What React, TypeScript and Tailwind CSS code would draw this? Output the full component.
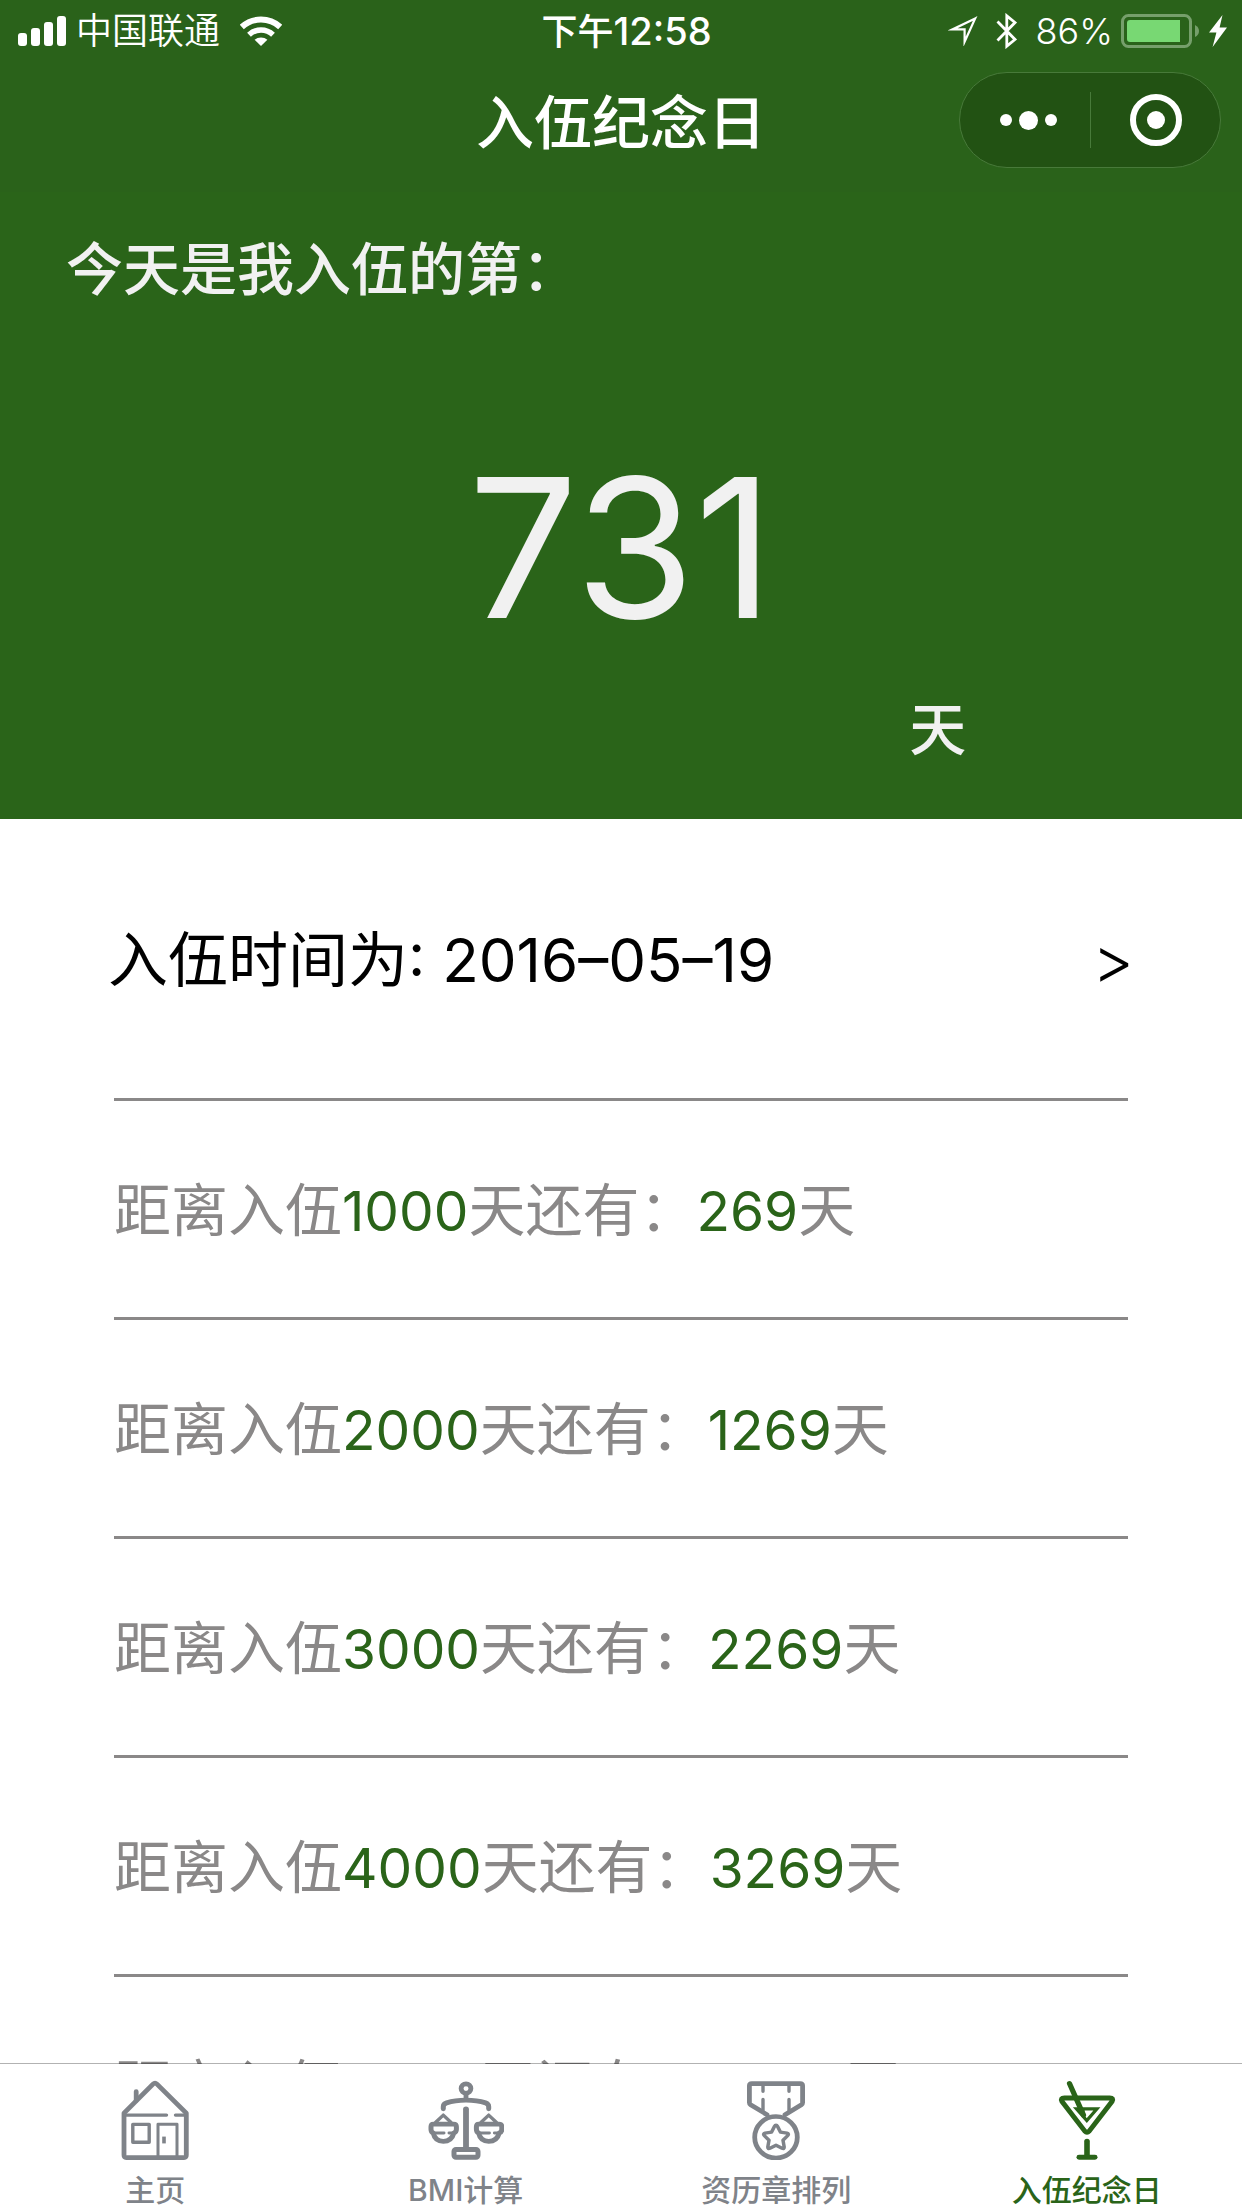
import React from "react";

const milestones = [
  { total: 1000, left: 269 },
  { total: 2000, left: 1269 },
  { total: 3000, left: 2269 },
  { total: 4000, left: 3269 },
  { total: 5000, left: 4269 },
];

function SignalIcon() {
  return (
    <svg width="48" height="30" viewBox="0 0 48 30" fill="currentColor" aria-hidden="true">
      <rect x="0" y="17" width="9" height="13" rx="3" />
      <rect x="13" y="12" width="9" height="18" rx="3" />
      <rect x="26" y="6" width="9" height="24" rx="3" />
      <rect x="39" y="0" width="9" height="30" rx="3" />
    </svg>
  );
}

function WifiIcon() {
  return (
    <svg width="42" height="30" viewBox="0 0 42 30" fill="none" stroke="currentColor" strokeWidth="6" aria-hidden="true">
      <path d="M1.8 11A28.5 28.5 0 0 1 40.2 11" />
      <path d="M9 18.8A17.5 17.5 0 0 1 33 18.8" strokeWidth="5.5" />
      <path d="M14.6 23.8A10 10 0 0 1 27.4 23.8L21 30Z" fill="currentColor" stroke="none" />
    </svg>
  );
}

function LocationIcon() {
  return (
    <svg width="30" height="30" viewBox="0 0 30 30" fill="none" stroke="currentColor" strokeWidth="2.2" aria-hidden="true">
      <path d="M27.2 2.4L4.5 13.4H16.6L16.6 25.8Z" strokeMiterlimit="6" />
    </svg>
  );
}

function BluetoothIcon() {
  return (
    <svg width="22" height="36" viewBox="0 0 22 36" fill="none" stroke="currentColor" strokeWidth="2.8" aria-hidden="true">
      <path d="M1.5 8.6L19 26.5L10.8 33.2V2.8L19 9.5L1.5 27.4" />
    </svg>
  );
}

function BatteryIcon() {
  return (
    <svg width="78" height="34" viewBox="0 0 78 34" aria-hidden="true">
      <rect x="1.5" y="1.5" width="68" height="31" rx="6" fill="none" stroke="#769f6b" strokeWidth="3" />
      <path d="M9 6H59V28H9Q6 28 6 25V9Q6 6 9 6Z" fill="#78d873" />
      <path d="M74 11Q78 13 78 17T74 23Z" fill="#769f6b" />
    </svg>
  );
}

function BoltIcon() {
  return (
    <svg width="18" height="32" viewBox="0 0 18 32" fill="currentColor" aria-hidden="true">
      <path d="M13.5 0L0 17.6H7.4L3.6 32L18 12.6H10.6Z" />
    </svg>
  );
}

function HomeIcon() {
  return (
    <svg width="68" height="80" viewBox="0 0 68 82" preserveAspectRatio="none" fill="none" stroke="currentColor" strokeLinecap="round" strokeLinejoin="round" aria-hidden="true">
      <path d="M3 34L32 4.2Q34 2.2 36 4.2L65.3 34V77Q65.3 79.5 63 79.5H5.2Q3 79.5 3 77Z" strokeWidth="4.8" />
      <path d="M4 36H45.5M54.5 36H64" strokeWidth="3.4" />
      <path d="M15.2 12V21" strokeWidth="4.8" />
      <rect x="11.8" y="45.4" width="16.4" height="18.4" strokeWidth="3.4" />
      <path d="M37 78V45.4H56V78" strokeWidth="3" />
      <path d="M43 58V65" strokeWidth="3.6" strokeLinecap="butt" />
    </svg>
  );
}

function Pan({ x }: { x: number }) {
  return (
    <g transform={`translate(${x} 0)`}>
      <path d="M7.5 43.5L15.3 36L23.1 43.5" strokeWidth="3.4" />
      <path d="M5.4 45.2H25.6Q28.4 45.2 28.4 48V50.5Q28.4 53.4 25.8 54.4Q23.6 62.9 15.3 62.9T5.2 54.4Q3 53.4 3 50.5V48Q3 45.2 5.4 45.2Z" strokeWidth="5" />
      <path d="M7 54.4H16M21 54.4H25" strokeWidth="3" />
    </g>
  );
}

function ScaleIcon() {
  return (
    <svg width="76" height="80" viewBox="0 0 76 82" preserveAspectRatio="none" fill="none" stroke="currentColor" strokeLinecap="round" strokeLinejoin="round" aria-hidden="true">
      <circle cx="38" cy="8.8" r="4.9" strokeWidth="4.8" />
      <path d="M38 15V20" strokeWidth="4.8" />
      <path d="M15.3 29.5V27.4Q15.3 24.5 18.6 23.4Q27 20.6 38 20.6T57.6 23.4Q60.7 24.5 60.7 27.4V29.5" strokeWidth="5" />
      <path d="M38 30V69" strokeWidth="5.8" />
      <rect x="26" y="71.2" width="24" height="8" rx="2" strokeWidth="5" />
      <Pan x={0} />
      <Pan x={45.4} />
    </svg>
  );
}

function MedalIcon() {
  return (
    <svg width="60" height="80" viewBox="0 0 60 82" preserveAspectRatio="none" fill="none" stroke="currentColor" strokeLinecap="round" strokeLinejoin="round" aria-hidden="true">
      <path d="M21 35.5L4.6 25.4Q3.4 24.6 3.4 23V6Q3.4 3.7 5.8 3.7H54.2Q56.6 3.7 56.6 6V23Q56.6 24.6 55.4 25.4L39 35.5" strokeWidth="4.8" />
      <path d="M17 6V11.5M17 20V31M43 6V11.5M43 20V31" strokeWidth="3.4" />
      <circle cx="30" cy="58.7" r="21.3" strokeWidth="4.8" />
      <path d="M30 46.3Q31 46.3 31.6 47.6L34.4 53.4L41 54.5Q43.4 55.2 41.7 57L37 61.7L38.2 68.6Q38.2 71 36 70L30 66.8L24 70Q21.8 71 21.8 68.6L23 61.7L18.3 57Q16.6 55.2 19 54.5L25.6 53.4L28.4 47.6Q29 46.3 30 46.3Z" strokeWidth="3.5" />
    </svg>
  );
}

function CocktailIcon() {
  return (
    <svg width="58" height="80" viewBox="0 0 58 82" preserveAspectRatio="none" fill="none" stroke="currentColor" strokeLinecap="round" strokeLinejoin="round" aria-hidden="true">
      <path d="M6.4 18.4H51.8Q56 18.4 54 22L31.2 52.4Q29 54.8 26.8 52.4L4 22Q2 18.4 6.4 18.4Z" strokeWidth="5" />
      <path d="M11.5 3.6L25.5 36" strokeWidth="5.2" />
      <path d="M18.4 29.6H39L28.8 41.6Z" strokeWidth="3.2" strokeLinejoin="miter" />
      <path d="M18.4 29.6H26V36L28 41Z" fill="currentColor" strokeWidth="1" />
      <path d="M29 63V78" strokeWidth="5.6" />
      <path d="M21 79.2H37" strokeWidth="5" />
    </svg>
  );
}

const tabs = [
  { label: "主页", icon: HomeIcon, active: false },
  { label: "BMI计算", icon: ScaleIcon, active: false },
  { label: "资历章排列", icon: MedalIcon, active: false },
  { label: "入伍纪念日", icon: CocktailIcon, active: true },
];

export default function App() {
  return (
    <div className="flex h-screen flex-col overflow-hidden bg-white font-['Inter','Noto_Sans_CJK_SC',sans-serif]">
      <header className="shrink-0 bg-[#2a621a] pb-3.5 text-white">
        <div className="grid h-[62px] grid-cols-[1fr_auto_1fr] items-center pr-[15px] pl-[18px] text-[36px] leading-[40px]">
          <div className="flex items-center">
            <SignalIcon />
            <span className="ml-2.5 font-[350]">中国联通</span>
            <span className="ml-5">
              <WifiIcon />
            </span>
          </div>
          <time className="pl-2 font-medium">
            下午<span className="text-[38px]">12:58</span>
          </time>
          <div className="flex items-center justify-end">
            <LocationIcon />
            <span className="ml-[18px]">
              <BluetoothIcon />
            </span>
            <span className="ml-[18px] font-[350]">86%</span>
            <span className="ml-2">
              <BatteryIcon />
            </span>
            <span className="ml-2.5">
              <BoltIcon />
            </span>
          </div>
        </div>
        <div className="grid h-[116px] grid-cols-[1fr_auto_1fr] items-center px-[21px]">
          <h1 className="col-start-2 pt-1.5 text-[58px] leading-[64px] font-medium">入伍纪念日</h1>
          <div className="flex h-24 w-[262px] items-center justify-self-end rounded-full border border-[#487a3a] bg-[#225213]">
            <button type="button" aria-label="更多" className="flex w-[130px] items-center justify-center gap-[7px] pl-1.5">
              <span className="size-3 rounded-full bg-white" />
              <span className="size-[19px] rounded-full bg-white" />
              <span className="size-3 rounded-full bg-white" />
            </button>
            <span className="h-14 w-px bg-[#487a3a]" />
            <button type="button" aria-label="关闭" className="flex flex-1 items-center justify-center">
              <span className="flex size-[52px] items-center justify-center rounded-full border-[6px] border-white">
                <span className="size-[18px] rounded-full bg-white" />
              </span>
            </button>
          </div>
        </div>
      </header>

      <main className="min-h-0 flex-1 overflow-hidden">
        <section className="bg-[#2a6419] pt-12 pb-[59px] text-[57px] leading-[60px] font-medium text-[#f1f1f1]">
          <h2 className="pl-[66px] font-medium">今天是我入伍的第：</h2>
          <p className="mt-[148px] text-center text-[194px] leading-[200px] font-normal">731</p>
          <p className="mt-[52px] ml-[73.2%]">天</p>
        </section>

        <section className="px-[114px] text-[57px] leading-[64px]">
          <button type="button" className="-mx-1.5 flex h-[279px] w-[calc(100%+12px)] items-center justify-between pt-0.5 text-[60px] text-black">
            <span>入伍时间为: 2016–05–19</span>
            <span className="text-[64px] font-light">&gt;</span>
          </button>
          <ul>
            {milestones.map((m) => (
              <li key={m.total} className="flex h-[219px] items-center border-t-[3px] border-[#8a8888] pt-1 whitespace-nowrap text-[#8a8888]">
                <span>
                  距离入伍<span className="text-[55px] text-[#2a6419]">{m.total}</span>天还有：<span className="text-[55px] text-[#2a6419]">{m.left}</span>天
                </span>
              </li>
            ))}
          </ul>
        </section>
      </main>

      <nav className="relative -mt-px grid shrink-0 grid-cols-4 border-t border-black/30 bg-white bg-clip-padding pt-4 pb-px">
        {tabs.map(({ label, icon: Icon, active }) => (
          <a
            key={label}
            href="#"
            aria-current={active ? "page" : undefined}
            className={
              active
                ? "flex flex-col items-center gap-[13px] text-[30px] leading-[34px] font-medium text-[#2a6419]"
                : "flex flex-col items-center gap-[13px] text-[30px] leading-[34px] font-medium text-[#7f8389]"
            }
          >
            <Icon />
            <span>{label}</span>
          </a>
        ))}
      </nav>
    </div>
  );
}
